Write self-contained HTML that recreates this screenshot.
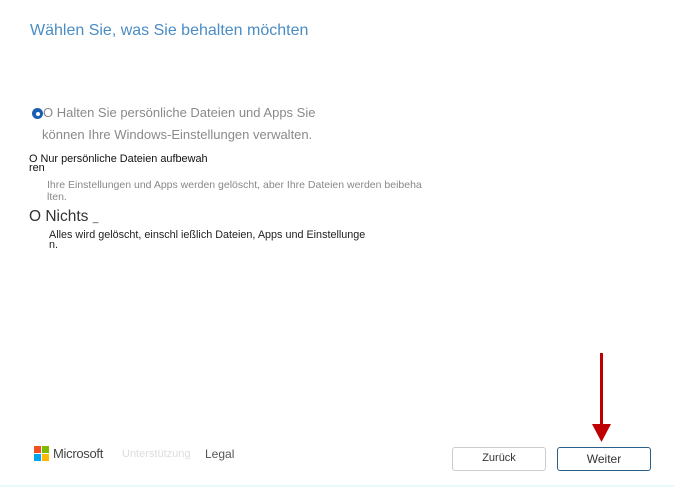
<!DOCTYPE html>
<html><head><meta charset="utf-8"><style>
body{margin:0;width:674px;height:487px;background:#fff;position:relative;overflow:hidden;font-family:"Liberation Sans",sans-serif}
.a{position:absolute;white-space:nowrap}
</style></head><body>
<div class="a" style="left:30px;top:22px;font-size:16px;color:#4a8cc4">Wählen Sie, was Sie behalten möchten</div>
<div class="a" style="left:32px;top:108px;width:11px;height:11px;border-radius:50%;background:#1a5fb0"></div>
<div class="a" style="left:36px;top:112px;width:4px;height:4px;border-radius:50%;background:#fff"></div>
<div class="a" style="left:43px;top:105px;font-size:13px;color:#8a8a8a">O Halten Sie persönliche Dateien und Apps Sie</div>
<div class="a" style="left:42px;top:127px;font-size:13px;color:#8a8a8a">können Ihre Windows-Einstellungen verwalten.</div>
<div class="a" style="left:29px;top:155px;font-size:10.9px;line-height:9px;color:#111">O Nur persönliche Dateien aufbewah<br>ren</div>
<div class="a" style="left:47px;top:179px;font-size:10.5px;line-height:12px;color:#888">Ihre Einstellungen und Apps werden gelöscht, aber Ihre Dateien werden beibeha<br>lten.</div>
<div class="a" style="left:29px;top:208px;font-size:15.5px;color:#333">O Nichts <span style="font-size:10px">_</span></div>
<div class="a" style="left:49px;top:230px;font-size:10.8px;line-height:10px;color:#222">Alles wird gelöscht, einschl ießlich Dateien, Apps und Einstellunge<br>n.</div>
<div class="a" style="left:34px;top:446px;width:7px;height:7px;background:#f25022"></div>
<div class="a" style="left:42px;top:446px;width:7px;height:7px;background:#7fba00"></div>
<div class="a" style="left:34px;top:454px;width:7px;height:7px;background:#00a4ef"></div>
<div class="a" style="left:42px;top:454px;width:7px;height:7px;background:#ffb900"></div>
<div class="a" style="left:53px;top:446px;font-size:13px;color:#444;letter-spacing:-0.3px">Microsoft</div>
<div class="a" style="left:122px;top:448px;font-size:11px;color:#ddd">Unterstützung</div>
<div class="a" style="left:205px;top:447px;font-size:12px;color:#555">Legal</div>
<div class="a" style="left:452px;top:447px;width:92px;height:22px;border:1px solid #ccc;border-radius:3px;font-size:11px;color:#333;text-align:center;line-height:20px">Zurück</div>
<div class="a" style="left:557px;top:447px;width:92px;height:22px;border:1px solid #2a5f8a;border-radius:3px;font-size:12px;color:#333;text-align:center;line-height:23px">Weiter</div>
<div class="a" style="left:600px;top:353px;width:3px;height:78px;background:#c00000"></div>
<svg class="a" style="left:592px;top:424px" width="19" height="19"><polygon points="0,0 19,0 9.5,18" fill="#c00000"/></svg>
<div class="a" style="left:0;top:485px;width:674px;height:2px;background:#e8fbfb"></div>
</body></html>
